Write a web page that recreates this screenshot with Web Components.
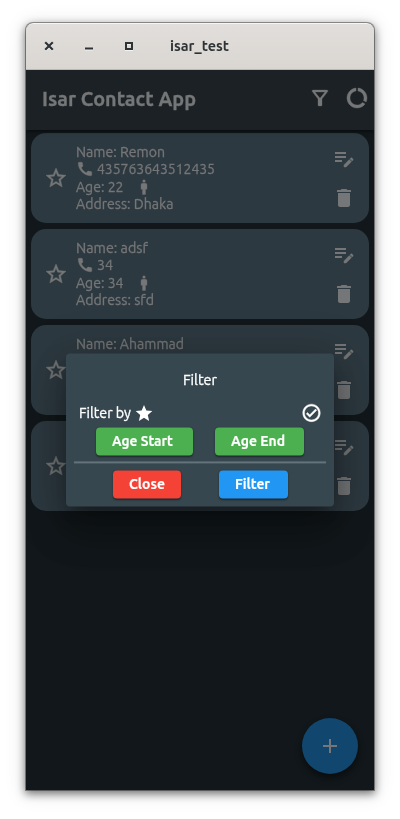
<!DOCTYPE html>
<html lang="en">
<head>
<meta charset="utf-8">
<title>isar_test</title>
<style>
html,body{margin:0;height:100%;background:#fff;overflow:hidden}
body{font-family:Ubuntu,"Noto Sans","Open Sans",sans-serif;font-size:14px}
</style>
</head>
<body>
<desktop-window></desktop-window>
<script>
const ICONS = {
  close:'<path d="M5.500 5.500l13 13M18.500 5.500l-13 13" stroke="currentColor" stroke-width="3.800" fill="none"/>',
  min:'<path d="M4 15h16v4H4z"/>',
  max:'<path d="M4 4h16v16H4zM8 8v8h8v-8z" fill-rule="evenodd"/>',
  filter:'<path d="M7 6h10l-5.010 6.300L7 6zm-2.750-.39C6.270 8.200 10 13 10 13v6c0 .55.45 1 1 1h2c.55 0 1-.45 1-1v-6s3.720-4.800 5.740-7.390c.51-.66.04-1.610-.79-1.610H5.040c-.83 0-1.300.95-.79 1.610z" stroke="currentColor" stroke-width=".3"/>',
  usage:'<path d="M13 2.050v3.030c3.390.49 6 3.390 6 6.920 0 .9-.18 1.750-.48 2.540l2.600 1.530c.56-1.240.88-2.620.88-4.070 0-5.180-3.950-9.450-9-9.950zM12 19c-3.870 0-7-3.130-7-7 0-3.530 2.610-6.430 6-6.920V2.050c-5.060.5-9 4.760-9 9.950 0 5.520 4.470 10 9.990 10 3.310 0 6.240-1.610 8.060-4.090l-2.600-1.530C16.170 17.980 14.210 19 12 19z" stroke="currentColor" stroke-width=".4"/>',
  starOutline:'<path d="M22 9.240l-7.190-.62L12 2 9.190 8.630 2 9.240l5.460 4.730L5.820 21 12 17.270 18.180 21l-1.630-7.030L22 9.240zM12 15.400l-3.760 2.270 1-4.280-3.320-2.880 4.380-.38L12 6.100l1.710 4.040 4.380.38-3.320 2.880 1 4.280L12 15.400z" stroke="currentColor" stroke-width=".4"/>',
  star:'<path d="M12 17.270L18.180 21l-1.640-7.030L22 9.240l-7.190-.61L12 2 9.190 8.630 2 9.240l5.460 4.730L5.820 21z"/>',
  phone:'<path d="M20.010 15.380c-1.230 0-2.420-.2-3.530-.56-.35-.12-.74-.03-1.010.24l-1.570 1.970c-2.830-1.350-5.480-3.900-6.890-6.830l1.950-1.660c.27-.28.35-.67.24-1.020-.37-1.110-.56-2.300-.56-3.530 0-.54-.45-.99-.99-.99H4.190C3.650 3 3 3.240 3 3.990 3 13.280 10.730 21 20.010 21c.71 0 .99-.63.99-1.180v-3.450c0-.54-.45-.99-.99-.99z" stroke="currentColor" stroke-width=".5"/>',
  man:'<circle cx="12" cy="4" r="2"/><path d="M14 7h-4c-1.100 0-2 .9-2 2v6h2v7h4v-7h2V9c0-1.100-.9-2-2-2z" stroke="currentColor" stroke-width=".4"/>',
  edit:'<path d="M3 10h11v2H3v-2zm0-2h11V6H3v2zm0 8h7v-2H3v2z"/><path d="M18.010 12.870l.71-.71c.39-.39 1.020-.39 1.410 0l.71.71c.39.39.39 1.020 0 1.410l-.71.71-2.120-2.120zm-.71.71l-5.300 5.300V21h2.120l5.300-5.300-2.120-2.120z" stroke="currentColor" stroke-width=".5"/>',
  trash:'<path d="M6 19c0 1.100.9 2 2 2h8c1.100 0 2-.9 2-2V7H6v12zM19 4h-3.500l-1-1h-5l-1 1H5v2h14V4z"/>',
  check:'<path d="M16.590 7.580L10 14.170l-2.590-2.580L6 13l4 4 8-8zM12 2C6.480 2 2 6.480 2 12s4.480 10 10 10 10-4.480 10-10S17.520 2 12 2zm0 18c-4.420 0-8-3.580-8-8s3.580-8 8-8 8 3.580 8 8-3.580 8-8 8z" stroke="currentColor" stroke-width=".5"/>',
  add:'<path d="M19 13h-6v6h-2v-6H5v-2h6V5h2v6h6v2z"/>'
};
const define = (name, css, html, ready) => customElements.define(name, class extends HTMLElement {
  connectedCallback() {
    if (this.shadowRoot) return;
    const t = document.createElement('template');
    t.innerHTML = `<style>*,:host{box-sizing:border-box}${css}</style>` + (typeof html === 'function' ? html(this) : html);
    this.attachShadow({mode:'open'}).append(t.content.cloneNode(true));
    if (ready) ready(this);
  }
});

define('ui-icon', ':host{display:block;flex:none}svg{display:block;fill:currentColor}',
  e => { const s = e.getAttribute('size') || 24;
    return `<svg width="${s}" height="${s}" viewBox="0 0 24 24">${ICONS[e.getAttribute('name')]}</svg>`; });

/* One line of text condensed or widened to the width given in "w". */
define('fit-text', ':host{display:block;flex:none;white-space:nowrap}span{display:inline-block;transform-origin:0 50%;-webkit-text-stroke:var(--stroke,.3px) currentColor}',
  '<span><slot></slot></span>',
  e => { const s = e.shadowRoot.querySelector('span'), w = +e.getAttribute('w');
    e.style.width = w + 'px';
    s.style.transform = `scaleX(${w / s.getBoundingClientRect().width})`; });

define('title-bar', `:host{display:flex;align-items:center;height:47px;padding:0 0 1px 16px;color:#2e3436;--stroke:0;
  background:linear-gradient(#e1dedb,#dad6d2);border-top:1px solid #f7f6f5;border-bottom:1px solid #bcb7b3;border-radius:7px 7px 0 0;font-weight:700;font-size:14px;line-height:20px}
  .b{width:14px;height:14px;display:grid;place-items:center;margin-right:26px;filter:drop-shadow(0 1px 0 #f4f2f1)}.b:nth-of-type(3){margin-right:34px}`,
  `<div class="b"><ui-icon name="close" size="14"></ui-icon></div><div class="b"><ui-icon name="min" size="12"></ui-icon></div><div class="b"><ui-icon name="max" size="12"></ui-icon></div><fit-text w="59">isar_test</fit-text>`);

define('app-bar', `:host{display:flex;align-items:center;height:60px;padding:0 5px 4px 16px;background:#1b2124;color:#757677;box-shadow:0 1px 4px #0009;position:relative}
  fit-text{font-size:20px;font-weight:600;line-height:28px;margin-right:auto;padding-top:1px}ui-icon+ui-icon{margin-left:13px}`,
  `<fit-text w="154">Isar Contact App</fit-text><ui-icon name="filter"></ui-icon><ui-icon name="usage"></ui-icon>`);

define('contact-card', `:host{display:flex;align-items:center;height:90px;padding:0 13px;border-radius:15px;background:#2d3940;color:#757677}
  .t{flex:1;margin-left:8px;font-size:14px}.r{display:flex;align-items:center;height:18px;line-height:18px}.r:first-child,.r:last-child{height:16px;line-height:16px}
  .p ui-icon{margin-right:3px}.m ui-icon{margin-left:11px}.a{display:grid;gap:16px}`,
  e => { const [n,nw,p,pw,a,d,dw] = (e.getAttribute('data') || '').split('|');
    return `<ui-icon name="starOutline"></ui-icon><div class="t">` +
     (n ? `<div class="r"><fit-text w="${nw}">Name: ${n}</fit-text></div>` : '') +
     (p ? `<div class="r p"><ui-icon name="phone" size="18"></ui-icon><fit-text w="${pw}">${p}</fit-text></div>
     <div class="r m"><fit-text w="47.500">Age: ${a}</fit-text><ui-icon name="man" size="18"></ui-icon></div>
     <div class="r"><fit-text w="${dw}">Address: ${d}</fit-text></div>` : '<div style="height:52px"></div>') +
     `</div><div class="a"><ui-icon name="edit"></ui-icon><ui-icon name="trash"></ui-icon></div>`; });

define('ui-button', `:host{display:grid;align-items:center;justify-items:start;padding-left:16px;height:28px;border-radius:4px;color:#fff;font-size:14px;font-weight:600;line-height:20px;--stroke:.15px;box-shadow:0 1px 2px #0007}`, '<slot></slot>');

define('filter-dialog', `:host{display:flex;flex-direction:column;width:268px;height:153px;padding:17px 8px 8px;background:#37474f;border-radius:4px;color:#fff;line-height:20px;
  box-shadow:0 11px 15px -7px #0005,0 24px 38px 3px #0003,0 9px 46px 8px #0003}
  .title{align-self:center}.row{display:flex;align-items:center}.by{height:24px;margin-top:11px;padding:0 4.500px 0 5px}.by ui-icon:nth-child(2){margin-left:3px;margin-right:auto}
  .age{gap:22px;padding:0 22px;margin-top:3px}hr{width:252px;height:2px;border:0;background:#65737a;margin:6px 0 7px}.act{gap:38px;padding-left:38.500px}
  .green{background:#4caf50}.red{background:#f44336}.blue{background:#2196f3}`,
  `<fit-text class="title" w="34">Filter</fit-text>
  <div class="row by"><fit-text w="52">Filter by</fit-text><ui-icon name="star" size="20"></ui-icon><ui-icon name="check" size="21"></ui-icon></div>
  <div class="row age"><ui-button class="green" style="width:97px"><fit-text w="61">Age Start</fit-text></ui-button><ui-button class="green" style="width:89px"><fit-text w="54">Age End</fit-text></ui-button></div>
  <hr><div class="row act"><ui-button class="red" style="width:68.500px"><fit-text w="36">Close</fit-text></ui-button><ui-button class="blue" style="width:68.500px"><fit-text w="35">Filter</fit-text></ui-button></div>`);

define('desktop-window', `:host{display:block;padding:23px 26px 29px;height:819px}
  .win{position:relative;width:348px;height:767px;background:#11171a;border-radius:7px 7px 0 0;box-shadow:0 0 0 1px #0000005c,0 3px 9px 1px #00000080,0 2px 20px 3px #00000018}
  .list{display:grid;gap:6px;padding:3px 5px}
  .clip{position:absolute;inset:47px 0 0;overflow:hidden}filter-dialog{position:absolute;left:40px;top:283px;transform:translateY(.4px)}
  .fab{position:absolute;right:16px;bottom:16px;width:56px;height:56px;border-radius:50%;display:grid;place-items:center;background:#11466f;color:#757677;box-shadow:0 4px 7px #0007}`,
  `<div class="win"><title-bar></title-bar><div class="clip"><app-bar></app-bar><div class="list">
  <contact-card data="Remon|89|435763643512435|118|22|Dhaka|97.500"></contact-card>
  <contact-card data="adsf|72|34|16|34|sfd|78"></contact-card>
  <contact-card data="Ahammad|108"></contact-card>
  <contact-card></contact-card></div>
  <div class="fab"><ui-icon name="add"></ui-icon></div><filter-dialog></filter-dialog></div></div>`);
</script>
</body>
</html>
